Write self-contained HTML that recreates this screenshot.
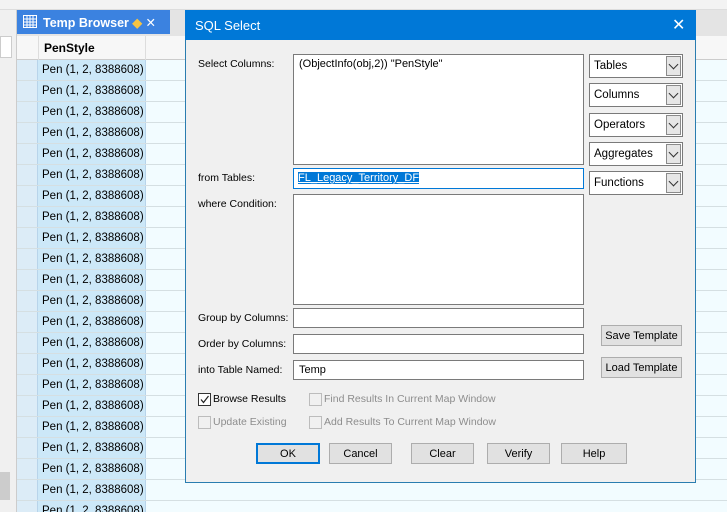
<!DOCTYPE html>
<html><head><style>
*{margin:0;padding:0;box-sizing:border-box}
html,body{width:727px;height:512px;overflow:hidden}
body{background:#f0f0f0;font-family:"Liberation Sans",sans-serif;font-size:12px;color:#000;position:relative}
.a{position:absolute;white-space:nowrap}
.row{position:absolute;left:17px;width:710px;height:21px;border-bottom:1px solid #d5dfe2}
.rh{position:absolute;left:0;width:21px;height:100%;background:#dcecf7;border-right:1px solid #b8d4ea}
.cell{position:absolute;left:21px;width:108px;height:100%;background:#cce8f8;padding:4px 0 0 4px;font-size:11.5px;white-space:nowrap;overflow:hidden;border-right:1px solid #b8d4ea}
.box{position:absolute;background:#fff;border:1px solid #7a7a7a;white-space:nowrap}
.lbl{position:absolute;left:198px;font-size:10.5px;white-space:nowrap}
.dd{position:absolute;left:589px;width:94px;height:24px;background:#fff;border:1px solid #7a7a7a;font-size:11.5px;padding:5px 0 0 4px}
.dd i{position:absolute;right:1px;top:1px;width:15px;height:20px;background:#e6e6e6;border:1px solid #8a8a8a}
.dd i:after{content:"";position:absolute;left:3px;top:4px;width:6px;height:6px;border-right:1px solid #333;border-bottom:1px solid #333;transform:rotate(45deg)}
.btn{position:absolute;height:21px;background:#e1e1e1;border:1px solid #adadad;text-align:center;font-size:11px;padding-top:4px;white-space:nowrap}
.cb{position:absolute;width:13px;height:13px;border:1px solid #bcbcbc;background:#f0f0f0}
.dis{color:#8d8d8d;font-size:10.5px}
</style></head><body>
<div class="a" style="left:0;top:0;width:727px;height:10px;background:#f3f3f3;border-bottom:1px solid #ddd"></div>
<div class="a" style="left:0;top:10px;width:17px;height:502px;background:#f0f0f0;border-right:1px solid #ccc"></div>
<div class="a" style="left:0;top:36px;width:12px;height:22px;background:#fff;border:1px solid #ccc"></div>
<div class="a" style="left:0;top:472px;width:10px;height:28px;background:#ccc"></div>
<div class="a" style="left:17px;top:10px;width:710px;height:26px;background:#e4e4e4"></div>
<div class="a" style="left:17px;top:10px;width:153px;height:24px;background:#3b82e0;color:#fff;font-weight:bold;font-size:12.5px;padding:5px 0 0 26px">Temp Browser <span style="color:#f6c342">◆</span> <span style="font-weight:normal">✕</span>
<svg class="a" style="left:6px;top:5px" width="14" height="13"><rect x="0.5" y="0.5" width="13" height="12" fill="none" stroke="#fff"/><path d="M0 4h14M0 7h14M0 10h14M4 0v13M7 0v13M10 0v13" stroke="#fff"/></svg></div>
<div class="a" style="left:17px;top:36px;width:710px;height:24px;background:#f7f7f7;border-bottom:1px solid #ccc"></div>
<div class="a" style="left:38px;top:36px;width:108px;height:24px;border-left:1px solid #ddd;border-right:1px solid #ddd;font-weight:bold;font-size:12px;padding:5px 0 0 5px">PenStyle</div>
<div class="a" style="left:17px;top:60px;width:710px;height:452px;background:#f2fcff"></div>
<div class="row" style="top:60px"><div class="rh"></div><div class="cell">Pen (1, 2, 8388608)</div></div>
<div class="row" style="top:81px"><div class="rh"></div><div class="cell">Pen (1, 2, 8388608)</div></div>
<div class="row" style="top:102px"><div class="rh"></div><div class="cell">Pen (1, 2, 8388608)</div></div>
<div class="row" style="top:123px"><div class="rh"></div><div class="cell">Pen (1, 2, 8388608)</div></div>
<div class="row" style="top:144px"><div class="rh"></div><div class="cell">Pen (1, 2, 8388608)</div></div>
<div class="row" style="top:165px"><div class="rh"></div><div class="cell">Pen (1, 2, 8388608)</div></div>
<div class="row" style="top:186px"><div class="rh"></div><div class="cell">Pen (1, 2, 8388608)</div></div>
<div class="row" style="top:207px"><div class="rh"></div><div class="cell">Pen (1, 2, 8388608)</div></div>
<div class="row" style="top:228px"><div class="rh"></div><div class="cell">Pen (1, 2, 8388608)</div></div>
<div class="row" style="top:249px"><div class="rh"></div><div class="cell">Pen (1, 2, 8388608)</div></div>
<div class="row" style="top:270px"><div class="rh"></div><div class="cell">Pen (1, 2, 8388608)</div></div>
<div class="row" style="top:291px"><div class="rh"></div><div class="cell">Pen (1, 2, 8388608)</div></div>
<div class="row" style="top:312px"><div class="rh"></div><div class="cell">Pen (1, 2, 8388608)</div></div>
<div class="row" style="top:333px"><div class="rh"></div><div class="cell">Pen (1, 2, 8388608)</div></div>
<div class="row" style="top:354px"><div class="rh"></div><div class="cell">Pen (1, 2, 8388608)</div></div>
<div class="row" style="top:375px"><div class="rh"></div><div class="cell">Pen (1, 2, 8388608)</div></div>
<div class="row" style="top:396px"><div class="rh"></div><div class="cell">Pen (1, 2, 8388608)</div></div>
<div class="row" style="top:417px"><div class="rh"></div><div class="cell">Pen (1, 2, 8388608)</div></div>
<div class="row" style="top:438px"><div class="rh"></div><div class="cell">Pen (1, 2, 8388608)</div></div>
<div class="row" style="top:459px"><div class="rh"></div><div class="cell">Pen (1, 2, 8388608)</div></div>
<div class="row" style="top:480px"><div class="rh"></div><div class="cell">Pen (1, 2, 8388608)</div></div>
<div class="row" style="top:501px"><div class="rh"></div><div class="cell">Pen (1, 2, 8388608)</div></div>

<div class="a" style="left:185px;top:10px;width:511px;height:473px;background:#f0f0f0;border:1px solid #2a7db0"></div>
<div class="a" style="left:185px;top:10px;width:511px;height:30px;background:#0078d7;color:#fff;font-size:13px;padding:8px 0 0 10px">SQL Select<span class="a" style="left:487px;top:5px;font-size:16px">✕</span></div>

<div class="lbl" style="top:58px">Select Columns:</div>
<div class="box" style="left:293px;top:54px;width:291px;height:111px;padding:3px 5px;font-size:11px">(ObjectInfo(obj,2)) "PenStyle"</div>
<div class="lbl" style="top:172px">from Tables:</div>
<div class="box" style="left:293px;top:168px;width:291px;height:21px;border-color:#0078d7;padding:3px 4px;font-size:11px"><span style="background:#0078d7;color:#fff;text-decoration:underline">FL_Legacy_Territory_DF</span></div>
<div class="lbl" style="top:198px">where Condition:</div>
<div class="box" style="left:293px;top:194px;width:291px;height:111px"></div>
<div class="lbl" style="top:312px">Group by Columns:</div>
<div class="box" style="left:293px;top:308px;width:291px;height:20px"></div>
<div class="lbl" style="top:338px">Order by Columns:</div>
<div class="box" style="left:293px;top:334px;width:291px;height:20px"></div>
<div class="lbl" style="top:364px">into Table Named:</div>
<div class="box" style="left:293px;top:360px;width:291px;height:20px;padding:3px 5px;font-size:11px">Temp</div>

<div class="dd" style="top:54px">Tables<i></i></div>
<div class="dd" style="top:83px">Columns<i></i></div>
<div class="dd" style="top:113px">Operators<i></i></div>
<div class="dd" style="top:142px">Aggregates<i></i></div>
<div class="dd" style="top:171px">Functions<i></i></div>

<div class="btn" style="left:601px;top:325px;width:81px">Save Template</div>
<div class="btn" style="left:601px;top:357px;width:81px">Load Template</div>

<div class="cb" style="left:198px;top:393px;border-color:#333;background:#fff"><svg width="11" height="11" style="position:absolute;left:0;top:0"><path d="M2 5.5l2.5 3L9.5 2" fill="none" stroke="#222" stroke-width="1.2"/></svg></div>
<div class="a" style="left:213px;top:393px;font-size:10.5px">Browse Results</div>
<div class="cb" style="left:309px;top:393px"></div>
<div class="a dis" style="left:324px;top:393px">Find Results In Current Map Window</div>
<div class="cb" style="left:198px;top:416px"></div>
<div class="a dis" style="left:213px;top:416px">Update Existing</div>
<div class="cb" style="left:309px;top:416px"></div>
<div class="a dis" style="left:324px;top:416px">Add Results To Current Map Window</div>

<div class="btn" style="left:256px;top:443px;width:64px;border:2px solid #0078d7;padding-top:3px">OK</div>
<div class="btn" style="left:329px;top:443px;width:63px">Cancel</div>
<div class="btn" style="left:411px;top:443px;width:63px">Clear</div>
<div class="btn" style="left:487px;top:443px;width:63px">Verify</div>
<div class="btn" style="left:561px;top:443px;width:66px">Help</div>
</body></html>
